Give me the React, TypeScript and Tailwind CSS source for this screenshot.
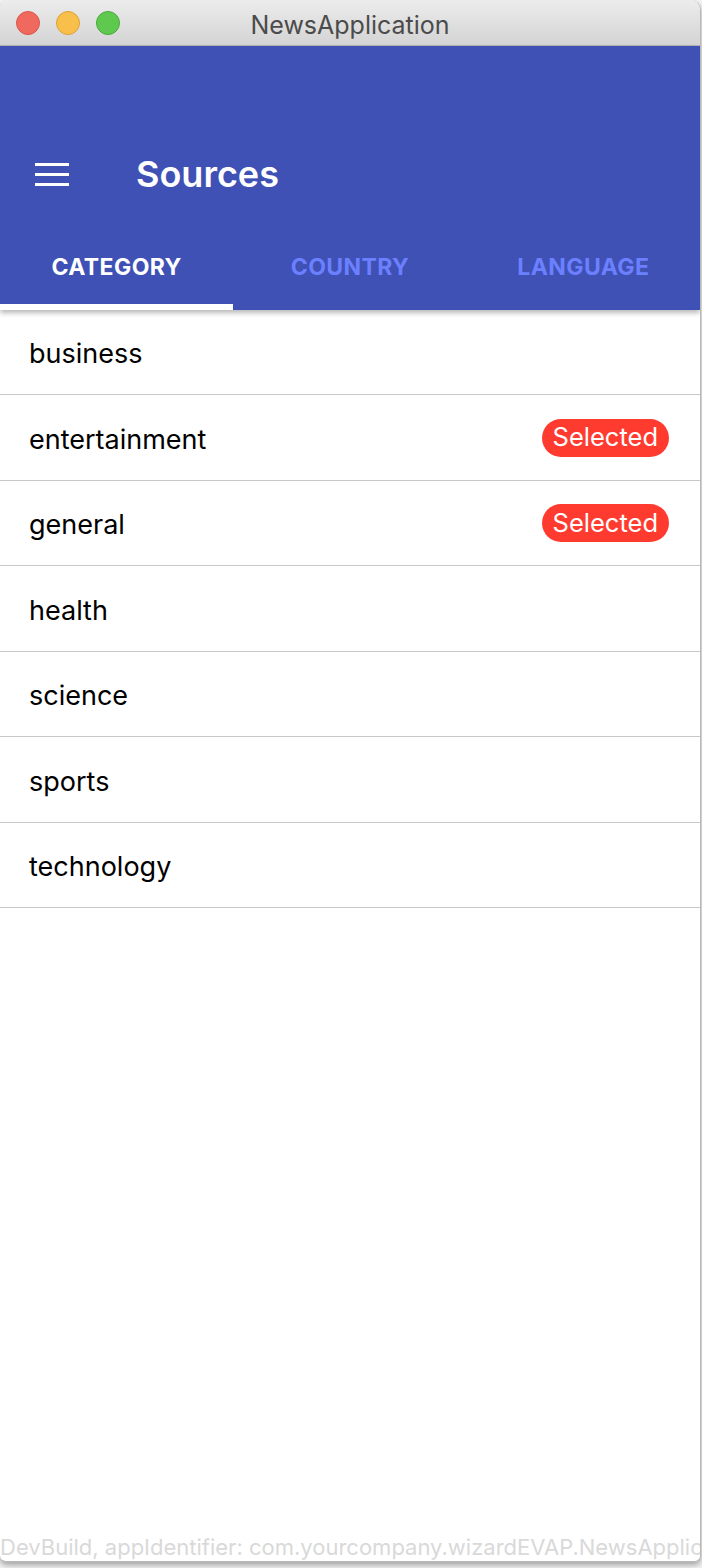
import { useState } from "react";

const categories = [
  { name: "business", selected: false, h: "h-[85px]" },
  { name: "entertainment", selected: true, h: "h-[86px]" },
  { name: "general", selected: true, h: "h-[85px]" },
  { name: "health", selected: false, h: "h-[86px]" },
  { name: "science", selected: false, h: "h-[85px]" },
  { name: "sports", selected: false, h: "h-[86px]" },
  { name: "technology", selected: false, h: "h-[85px]" },
];

const tabs = ["CATEGORY", "COUNTRY", "LANGUAGE"];

export default function App() {
  const [tab, setTab] = useState(0);

  return (
    <div className="w-[702px] h-[1568px] bg-[#f4f4f4] overflow-hidden font-['Inter','Helvetica_Neue',sans-serif]">
      <div className="w-[701px] h-[1562px] flex flex-col bg-white rounded-t-[10px] rounded-b-[6px] border border-[#b9b9b9] border-l-0 border-t-0 overflow-hidden shadow-[0_3px_6px_rgba(0,0,0,0.35)]">
        {/* TITLE BAR */}
        <div className="relative h-[46px] shrink-0 flex items-center bg-gradient-to-b from-[#ececec] to-[#d4d4d4] border-b border-[#b4b4b4]">
          <div className="flex items-center gap-[16px] pl-[16px]">
            <span className="w-[24px] h-[24px] rounded-full bg-[#f0695f] border border-[#dc554b]" />
            <span className="w-[24px] h-[24px] rounded-full bg-[#f8bf4a] border border-[#dea236]" />
            <span className="w-[24px] h-[24px] rounded-full bg-[#5fc94f] border border-[#4aaa3b]" />
          </div>
          <span className="absolute left-0 right-0 top-[9px] text-center text-[25px] leading-[32px] text-[#4b4b4b] pointer-events-none">
            NewsApplication
          </span>
        </div>

        {/* HEADER */}
        <div className="shrink-0 bg-[#3f51b5] shadow-[0_3px_5px_rgba(0,0,0,0.28)] relative z-10">
          <div className="h-[200px] flex items-center pt-[56px]">
            <button className="ml-[35px] w-[34px] flex flex-col gap-[7px]">
              <span className="block h-[3px] bg-white" />
              <span className="block h-[3px] bg-white" />
              <span className="block h-[3px] bg-white" />
            </button>
            <h1 className="ml-[67px] text-[36px] font-semibold text-white leading-none">Sources</h1>
          </div>
          <div className="flex h-[64px]">
            {tabs.map((t, i) => (
              <button
                key={t}
                onClick={() => setTab(i)}
                className={`flex-1 flex flex-col ${tab === i ? "text-white" : "text-[#6c80ff]"}`}
              >
                <span className="flex-1 flex items-center justify-center pb-[16px] text-[23px] font-bold tracking-[0.4px]">
                  {t}
                </span>
                <span className={`block h-[6px] w-full ${tab === i ? "bg-white" : "bg-transparent"}`} />
              </button>
            ))}
          </div>
        </div>

        {/* LIST */}
        <div className="flex-1 flex flex-col">
          {categories.map((c) => (
            <div
              key={c.name}
              className={`${c.h} shrink-0 flex items-center justify-between pl-[29px] pr-[31px] border-b border-[#c8c7cc]`}
            >
              <span className="text-[27px] text-black pt-[5px]">{c.name}</span>
              {c.selected && (
                <span className="h-[38px] px-[11px] flex items-center rounded-full bg-[#ff3b30] text-white text-[25.5px]">
                  Selected
                </span>
              )}
            </div>
          ))}
        </div>

        {/* FOOTER */}
        <div className="shrink-0 h-[28px] whitespace-nowrap overflow-hidden text-[22px] leading-[28px] text-[#d9d9d9]">
          DevBuild, appIdentifier: com.yourcompany.wizardEVAP.NewsApplication
        </div>
      </div>
    </div>
  );
}
